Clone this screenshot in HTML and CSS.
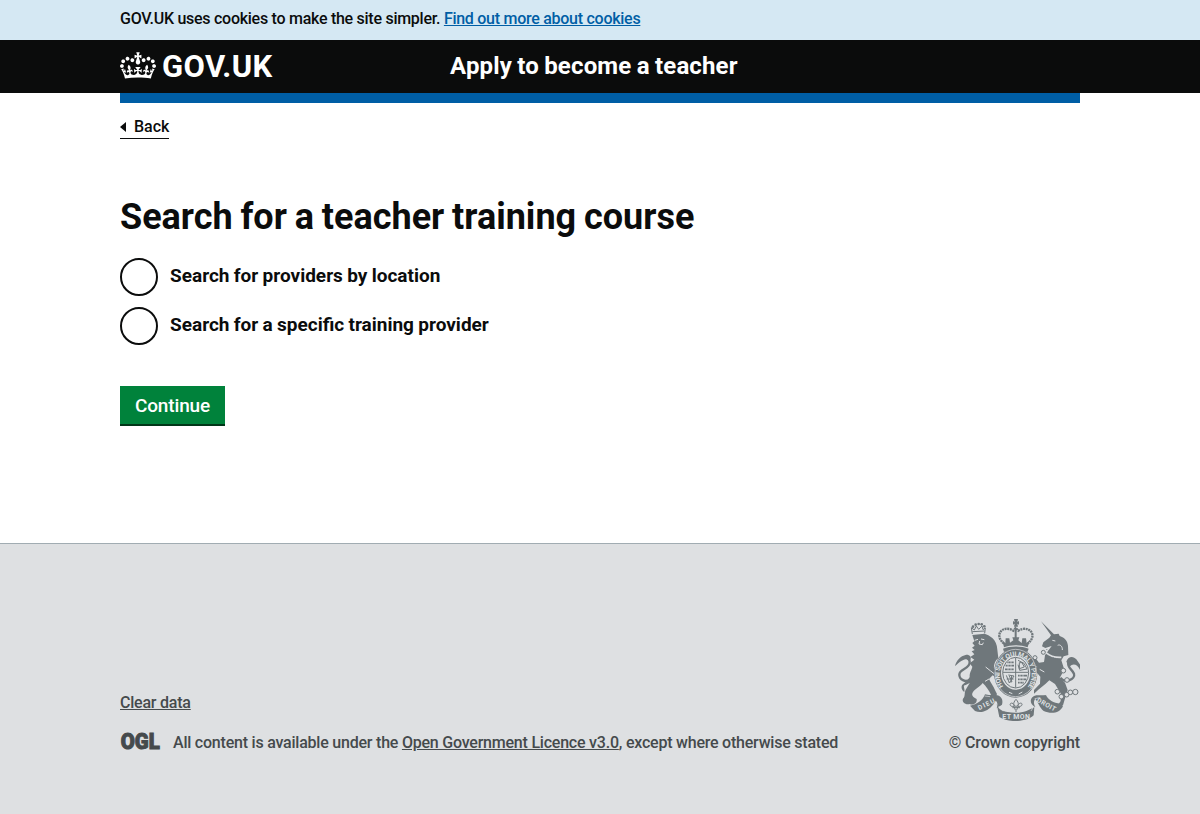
FILE: index.html
```html
<!DOCTYPE html>
<html lang="en">
<head>
<meta charset="utf-8">
<title>Search for a teacher training course</title>
<link rel="stylesheet" href="styles.css">
</head>
<body>
<div class="cookie-bar"><p class="container">GOV.UK uses cookies to make the site simpler. <a href="#">Find out more about cookies</a></p></div>
<header class="header">
  <div class="container header-inner">
    <a class="logo" href="#">
      <svg class="crown" viewBox="0 0 132 97" aria-hidden="true"><path fill="currentColor" fill-rule="evenodd" d="M25 30.2c3.5 1.5 7.7-.2 9.1-3.7 1.5-3.6-.2-7.8-3.9-9.2-3.6-1.4-7.6.3-9.1 3.9-1.4 3.5.3 7.5 3.9 9zM9 39.5c3.6 1.5 7.8-.2 9.2-3.7 1.5-3.6-.2-7.8-3.9-9.1-3.6-1.5-7.6.2-9.1 3.8-1.4 3.5.3 7.5 3.8 9zM4.4 57.2c3.5 1.5 7.7-.2 9.1-3.8 1.5-3.6-.2-7.7-3.9-9.1-3.5-1.5-7.6.3-9.1 3.8-1.4 3.5.3 7.6 3.9 9.1zm38.3-21.4c3.5 1.5 7.7-.2 9.1-3.8 1.5-3.6-.2-7.7-3.9-9.1-3.6-1.5-7.6.3-9.1 3.8-1.3 3.6.4 7.7 3.9 9.1zm64.4-5.6c-3.6 1.5-7.8-.2-9.1-3.7-1.5-3.6.2-7.8 3.8-9.2 3.6-1.4 7.7.3 9.2 3.9 1.3 3.5-.4 7.5-3.9 9zm15.9 9.3c-3.6 1.5-7.7-.2-9.1-3.7-1.5-3.6.2-7.8 3.7-9.1 3.6-1.5 7.7.2 9.2 3.8 1.5 3.5-.3 7.5-3.8 9zm4.7 17.7c-3.6 1.5-7.8-.2-9.2-3.8-1.5-3.6.2-7.7 3.9-9.1 3.6-1.5 7.7.3 9.2 3.8 1.3 3.5-.4 7.6-3.9 9.1zM89.3 35.8c-3.6 1.5-7.8-.2-9.2-3.8-1.4-3.6.2-7.7 3.9-9.1 3.6-1.5 7.7.3 9.2 3.8 1.4 3.6-.3 7.7-3.9 9.1zM69.7 17.7l8.9 4.7V9.3l-8.9 2.8c-.2-.3-.5-.6-.9-.9L72.4 0H59.6l3.5 11.2c-.3.3-.6.5-.9.9l-8.8-2.8v13.1l8.8-4.7c.3.3.6.7.9.9l-5 15.4v.1c-.2.8-.4 1.6-.4 2.4 0 4.1 3.1 7.5 7 8.1h.2c.3 0 .7.1 1 .1.4 0 .7 0 1-.1h.2c4-.6 7.1-4.1 7.1-8.1 0-.8-.1-1.7-.4-2.4V34l-5.1-15.4c.4-.2.7-.6 1-.9zM66 92.8c16.9 0 32.8 1.1 47.1 3.2 4-16.9 8.9-26.7 14-33.5l-9.6-3.4c1 4.9 1.1 7.2 0 10.2-1.5-1.4-3-4.3-4.2-8.7L108.6 76c2.8-2 5-3.2 7.5-3.3-4.4 9.4-10 11.9-13.6 11.2-4.3-.8-6.3-4.6-5.6-7.9 1-4.7 5.7-5.9 8-.5 4.3-8.7-3-11.4-7.6-8.8 7.1-7.2 7.9-13.5 2.1-21.1-8 6.1-8.1 12.3-4.5 20.8-4.7-5.4-12.1-2.5-9.5 6.2 3.4-5.2 7.9-2 7.2 3.1-.6 4.3-6.4 7.8-13.5 7.2-10.3-.9-10.9-8-11.2-13.8 2.5-.5 7.1 1.8 11 7.3L80.2 60c-4.1 4.4-8 5.3-12.3 5.4 1.4-4.4 8-11.6 8-11.6H55.5s6.4 7.2 7.9 11.6c-4.2-.1-8-1-12.3-5.4l1.4 16.4c3.9-5.5 8.5-7.7 10.9-7.3-.3 5.8-.9 12.8-11.1 13.8-7.2.6-12.9-2.9-13.5-7.2-.7-5 3.8-8.3 7.1-3.1 2.7-8.7-4.6-11.6-9.4-6.2 3.7-8.5 3.6-14.7-4.6-20.8-5.8 7.6-5 13.9 2.2 21.1-4.7-2.6-11.9.1-7.7 8.8 2.3-5.5 7.1-4.2 8.1.5.7 3.3-1.3 7.1-5.7 7.9-3.5.7-9-1.8-13.5-11.2 2.5.1 4.7 1.3 7.5 3.3l-4.7-15.4c-1.2 4.4-2.7 7.2-4.3 8.7-1.1-3-.9-5.3 0-10.2l-9.5 3.4c5 6.9 9.9 16.7 14 33.5 14.8-2.1 30.8-3.2 47.7-3.2z"/></svg>
      <span class="logo-text">GOV.UK</span>
    </a>
    <a class="service-name" href="#">Apply to become a teacher</a>
  </div>
</header>
<div class="content">
  <div class="container"><div class="blue-bar"></div></div>
  <div class="container page">
    <a class="back" href="#">Back</a>
    <main>
      <h1>Search for a teacher training course</h1>
      <div class="radios">
        <label class="radio"><input type="radio" name="search"><span>Search for providers by location</span></label>
        <label class="radio"><input type="radio" name="search"><span>Search for a specific training provider</span></label>
      </div>
      <button class="button" type="button">Continue</button>
    </main>
  </div>
</div>
<footer class="footer">
  <div class="container footer-inner">
    <div class="footer-meta">
      <a class="clear" href="#">Clear data</a>
      <div class="licence">
        <svg class="ogl" viewBox="0 0 41 17" role="img" aria-label="OGL"><text x="0.8" y="16.2" textLength="39" lengthAdjust="spacingAndGlyphs">OGL</text></svg>
        <span>All content is available under the <a href="#">Open Government Licence v3.0</a>, except where otherwise stated</span>
      </div>
    </div>
    <a class="copyright" href="#">
      <svg class="arms" viewBox="30 27 375 306" aria-hidden="true">
        <!-- lion -->
        <path class="s tail" d="M76 207C62 220 42 208 43 193C44 175 76 178 74 155C73 144 60 140 50 148"/>
        <path class="f" d="M30 168C34 152 45 138 64 134C76 134 80 142 76 150C62 141 48 152 30 168Z"/>
        <path class="f" d="M82 75L119 71L130 76L142 84C151 92 156 104 157 119L160 145C151 151 146 163 147 176L160 190L157 205L143 196L132 207C136 217 145 228 151 242L156 252C152 266 137 265 133 257L138 254C132 241 123 229 113 219C108 228 94 234 86 243C76 255 84 262 95 267C97 279 86 287 74 282C60 285 50 275 54 266C62 258 57 249 62 239L74 219L62 225C51 227 61 234 58 246C49 239 48 229 52 224C61 216 71 210 74 201C73 187 80 181 82 170L74 160L88 149L76 141L88 133L80 124L89 120L81 113L89 107L82 99L88 94Z"/>
        <path class="n" d="M89 91L99 88M108 87L118 89M104 93L102 102L112 104L115 98M122 171L137 183L150 193M120 214L132 207"/>
        <path class="s" d="M82 72L79 53L88 60L94 48L101 58L111 48L114 59L121 54L119 70M82 65L119 63"/>
        <g class="dots"><circle cx="84" cy="50" r="4"/><circle cx="92" cy="44" r="4"/><circle cx="101" cy="42" r="4"/><circle cx="110" cy="43" r="4"/><circle cx="118" cy="49" r="4"/></g>
        <!-- unicorn -->
        <path class="f" d="M288 34L327 73L341 71L344 78C359 83 368 93 369 108L370 135L356 139L349 151L357 176L352 190L344 204L360 218L368 240L361 262L354 286L338 287L347 273L347 250L330 222L313 211L302 221L280 239L267 251L267 240L285 221L286 200L267 178L277 171L263 158L260 144L272 145L282 158L297 156L300 136L320 108L301 114L291 109L295 97L313 83L318 76Z"/>
        <path class="s tail" d="M346 203C360 221 392 208 387 191C381 177 366 173 370 158C374 145 388 148 394 158"/>
        <path class="f" d="M364 155C370 137 386 138 394 148L406 165L406 181C398 164 385 158 374 170Z"/>
        <path class="n collar" d="M303 128C318 141 334 143 349 142"/>
        <path class="n" d="M322 91L331 93M338 106C346 102 353 110 352 120M284 178L298 186"/>
        <path class="s" stroke-dasharray="3 4" d="M304 117C320 135 336 137 350 136M303 139L345 148"/>
        <g class="rings"><circle cx="295" cy="127" r="6"/><circle cx="270" cy="143" r="6"/><circle cx="355" cy="182" r="7"/><circle cx="366" cy="210" r="7"/><circle cx="337" cy="245" r="7"/><circle cx="349" cy="260" r="7"/><circle cx="365" cy="254" r="7"/><circle cx="376" cy="247" r="7"/><circle cx="391" cy="246" r="8"/></g>
        <!-- crown over the shield -->
        <path class="f" d="M204 33L209 36L207 27H219L217 36L222 33V44L217 41L219 50H207L209 41L204 44Z"/>
        <path class="s crown-arch" d="M177 101C145 75 173 43 205 62L212 54L220 62C251 43 281 75 248 101"/>
        <path class="s crown-stem" d="M212 54V91"/>
        <path class="f" d="M172 91L181 100L182 85H193L195 98L205 91L202 82H223L220 91L230 99L232 85H243L245 99L254 91L248 112C226 104 197 104 177 112Z"/>
        <path class="f" d="M174 116C195 107 229 107 251 116L247 126C227 118 199 118 177 126Z"/>
        <!-- garter and quartered shield -->
        <ellipse class="f" cx="212" cy="189" rx="65" ry="74"/>
        <ellipse class="n thin" cx="212" cy="189" rx="62" ry="71"/>
        <ellipse class="p" cx="212" cy="188" rx="44" ry="51"/>
        <ellipse class="s" cx="212" cy="188" rx="39" ry="46"/>
        <path class="s" d="M212 143V233M174 187H250"/>
        <path class="s quarter" d="M186 157H206M182 167H207M180 178H206M219 197H246M219 208H244M219 218H237"/>
        <path class="n thin" d="M189 152V182M198 150V182M225 192V226M234 192V220"/>
        <path class="s" d="M219 151L237 160L246 177L224 181L219 164M223 158V176L238 171L231 158ZM184 196L193 219L207 198L190 195M193 198L201 216M200 198L198 218M185 207L206 207"/>
        <path class="n" d="M192 247L202 251M221 252L232 246"/>
        <path id="garter" fill="none" d="M175 229A48 55 0 1 1 249 229"/>
        <text class="motto" font-size="20"><textPath href="#garter" textLength="238" lengthAdjust="spacing">HONI SOIT QUI MAL Y PENSE</textPath></text>
        <!-- motto ribbon -->
        <path class="f" d="M75 287C96 283 113 272 120 253L160 260L146 282C130 303 110 311 90 303Z"/>
        <path class="f" d="M119 256H143C163 250 177 265 171 284L155 295C163 275 150 266 132 264Z"/>
        <path class="f" d="M155 282C162 302 174 303 188 306C206 310 228 309 244 303L268 292L266 316C245 337 189 339 163 321Z"/>
        <path class="f" d="M270 291C252 282 253 260 274 256H304L295 264L278 263C266 266 264 279 271 291Z"/>
        <path class="f" d="M269 265L303 256C311 270 324 279 347 281L354 288C345 310 318 313 296 303C284 294 280 277 269 265Z"/>
        <path class="n thin" d="M119 258L135 260M161 288L174 304M264 293L258 303M269 266L286 263"/>
        <text class="motto" font-size="20" transform="rotate(-27 123 283)" x="97" y="290" textLength="54">DIEU</text>
        <text class="motto" font-size="21" x="172" y="328" textLength="83">ET MON</text>
        <text class="motto" font-size="20" transform="rotate(29 304 282)" x="274" y="290" textLength="62">DROIT</text>
        <path class="s" d="M213 268C201 281 208 286 210 299M213 268C225 281 218 286 216 299M207 289C190 292 194 274 204 281C208 284 208 289 213 289C218 289 218 284 223 281C233 274 236 292 219 289M202 293H225M213 297V306"/>
      </svg>
      <span class="crown-copyright">© Crown copyright</span>
    </a>
  </div>
</footer>
</body>
</html>
```
FILE: styles.css
```css
* { box-sizing: border-box; }
body { margin: 0; background: #dee0e2; color: #0b0c0c; font: 500 16px/20px Roboto, Arial, sans-serif; }
.container { width: 960px; margin: 0 auto; }
.cookie-bar { height: 40px; background: #d5e8f3; padding-top: 9px; letter-spacing: -0.27px; }
.cookie-bar a { color: #005ea5; }
.header { height: 53px; background: #0b0c0c; color: #fff; }
.header-inner { display: flex; }
.header a { color: #fff; text-decoration: none; font-weight: 700; }
.logo { width: 330px; height: 53px; display: flex; align-items: flex-start; gap: 6px; }
.crown { width: 36px; height: 27px; margin-top: 12px; }
.logo-text { font-size: 31px; line-height: 53px; letter-spacing: 0.4px; }
.service-name { font-size: 24px; line-height: 52px; letter-spacing: 0.15px; word-spacing: -0.8px; }
.content { background: #fff; }
.blue-bar { height: 10px; background: #005ea5; }
.page { height: 440px; padding-top: 14px; }
.back { display: flex; width: fit-content; align-items: center; height: 22px; padding-bottom: 1px; color: #0b0c0c; border-bottom: 1px solid #0b0c0c; text-decoration: none; }
.back::before { content: ""; border: 5px solid transparent; border-left: 0; border-right: 6px solid #0b0c0c; margin-right: 8px; }
h1 { margin: 57px 0 0; font-size: 36px; line-height: 42px; font-weight: 700; word-spacing: -1.1px; }
.radios { margin-top: 20px; display: grid; gap: 11px; }
.radio { display: flex; height: 38px; gap: 12px; font-size: 19px; line-height: 35px; font-weight: 700; word-spacing: -0.4px; }
.radio input { appearance: none; margin: 0; width: 38px; height: 38px; border: 2px solid #0b0c0c; border-radius: 50%; background: #fff; }
.button { display: block; margin-top: 41px; width: 105px; height: 40px; padding: 0; border: 0; background: #00823b; color: #fff; box-shadow: inset 0 -2px #003618; font: 500 19px/38px Roboto, Arial, sans-serif; letter-spacing: -0.15px; }
.footer { height: 271px; border-top: 1px solid #a1acb2; background: #dee0e2; color: #454a4c; }
.footer-inner { display: flex; justify-content: space-between; padding-top: 75px; letter-spacing: -0.22px; }
.footer a { color: #454a4c; }
.footer-meta { padding-top: 74px; display: grid; gap: 20px; align-content: start; }
.licence { display: flex; gap: 12px; }
.ogl { width: 41px; height: 17px; overflow: visible; }
.ogl text { font: 900 22px Roboto, sans-serif; letter-spacing: 0; fill: #454a4c; stroke: #454a4c; }
.footer .copyright { display: grid; justify-items: end; gap: 12px; text-decoration: none; }
.crown-copyright { letter-spacing: -0.13px; }
.arms { width: 125px; height: 102px; letter-spacing: 0; }
.f, .dots { fill: #6f777b; }
.p { fill: #dee0e2; }
.s { fill: none; stroke: #6f777b; stroke-width: 3; }
.tail { stroke-width: 7; }
.crown-arch { stroke-width: 7; stroke-dasharray: 6 2; }
.crown-stem { stroke-width: 6; }
.quarter { stroke-width: 5; }
.n { fill: none; stroke: #dee0e2; stroke-width: 3; }
.thin { stroke-width: 2; }
.collar { stroke-width: 5; }
.rings { fill: #dee0e2; stroke: #6f777b; stroke-width: 3; }
.motto { fill: #dee0e2; font-family: Roboto, sans-serif; font-weight: 700; }
```
